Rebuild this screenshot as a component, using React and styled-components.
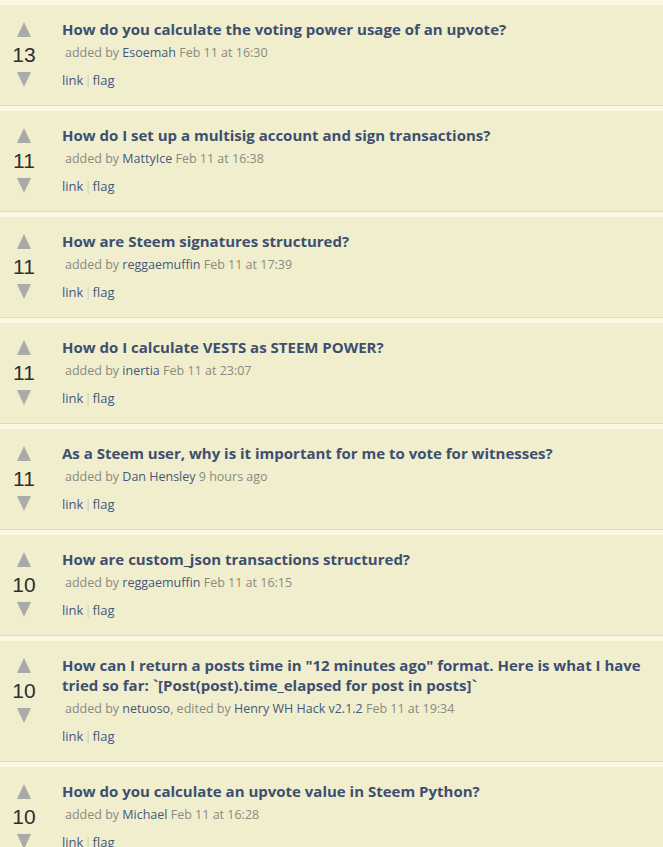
import React from "react";
import styled, { createGlobalStyle } from "styled-components";

const Global = createGlobalStyle`
  html, body { margin: 0; padding: 0; }
  body {
    background: #faf8e2;
    font-family: "Open Sans", "DejaVu Sans", sans-serif;
  }
`;

const List = styled.div`
  padding-top: 5px;
`;

const Card = styled.div`
  display: flex;
  background: #f1eecd;
  border-bottom: 1px solid #dcdacb;
  margin-bottom: 5px;
`;

const VoteCol = styled.div`
  width: 48px;
  flex: none;
  display: flex;
  flex-direction: column;
  align-items: center;
  padding-top: 17px;
`;

const Score = styled.div`
  font-family: "Liberation Sans", Arial, sans-serif;
  font-size: 21px;
  line-height: 35px;
  color: #2f2f2f;
`;

const Body = styled.div`
  flex: 1;
  padding: 14px 14px 16px 14px;
  min-width: 0;
`;

const Title = styled.div`
  font-weight: 700;
  font-size: 15px;
  line-height: 20px;
  color: #3d4f70;
`;

const Meta = styled.div`
  margin-top: 5px;
  padding-left: 3px;
  font-size: 12.5px;
  line-height: 18px;
  color: #8a8a80;
`;

const Author = styled.span`
  color: #46587a;
`;

const Links = styled.div`
  margin-top: 9px;
  font-size: 13px;
  line-height: 18px;
  color: #46587a;
  display: flex;
  align-items: center;
`;

const Sep = styled.span`
  color: #cfcdb8;
  margin: 0 1px;
`;

const Arrow = ({ down }) => (
  <svg width="16" height="15" viewBox="0 0 16 15" style={{ display: "block" }}>
    {down ? (
      <polygon points="1,0 15,0 8,15" fill="#aaaaaa" />
    ) : (
      <polygon points="8,0 15,15 1,15" fill="#aaaaaa" />
    )}
  </svg>
);

const items = [
  { score: 13, title: "How do you calculate the voting power usage of an upvote?", meta: [["added by "], ["Esoemah", 1], [" Feb 11 at 16:30"]] },
  { score: 11, title: "How do I set up a multisig account and sign transactions?", meta: [["added by "], ["MattyIce", 1], [" Feb 11 at 16:38"]] },
  { score: 11, title: "How are Steem signatures structured?", meta: [["added by "], ["reggaemuffin", 1], [" Feb 11 at 17:39"]] },
  { score: 11, title: "How do I calculate VESTS as STEEM POWER?", meta: [["added by "], ["inertia", 1], [" Feb 11 at 23:07"]] },
  { score: 11, title: "As a Steem user, why is it important for me to vote for witnesses?", meta: [["added by "], ["Dan Hensley", 1], [" 9 hours ago"]] },
  { score: 10, title: "How are custom_json transactions structured?", meta: [["added by "], ["reggaemuffin", 1], [" Feb 11 at 16:15"]] },
  { score: 10, title: "How can I return a posts time in \"12 minutes ago\" format. Here is what I have tried so far:  `[Post(post).time_elapsed for post in posts]`", meta: [["added by "], ["netuoso", 1], [", edited by "], ["Henry WH Hack v2.1.2", 1], [" Feb 11 at 19:34"]] },
  { score: 10, title: "How do you calculate an upvote value in Steem Python?", meta: [["added by "], ["Michael", 1], [" Feb 11 at 16:28"]] },
];

export default function App() {
  return (
    <>
      <Global />
      <List>
        {items.map((it, i) => (
          <Card key={i}>
            <VoteCol>
              <Arrow />
              <Score>{it.score}</Score>
              <Arrow down />
            </VoteCol>
            <Body>
              <Title>{it.title}</Title>
              <Meta>
                {it.meta.map(([t, a], j) => (a ? <Author key={j}>{t}</Author> : <span key={j}>{t}</span>))}
              </Meta>
              <Links>
                <span>link</span>
                <Sep>|</Sep>
                <span>flag</span>
              </Links>
            </Body>
          </Card>
        ))}
      </List>
    </>
  );
}
